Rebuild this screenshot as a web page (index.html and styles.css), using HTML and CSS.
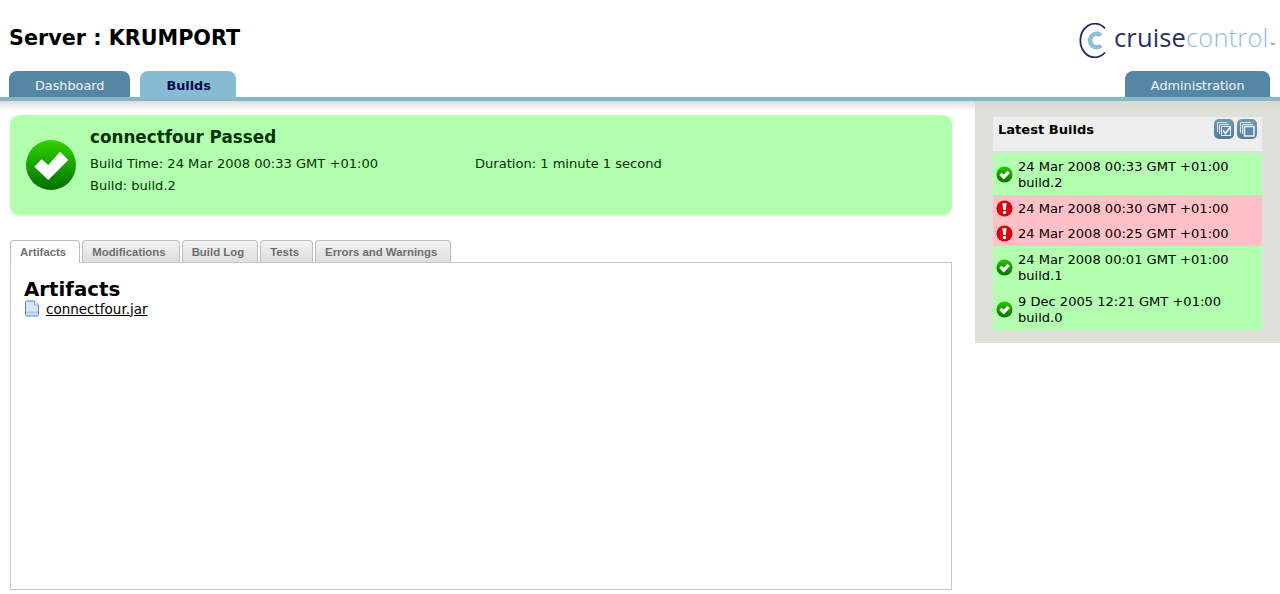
FILE: index.html
```html
<!DOCTYPE html>
<html lang="en">
<head>
<meta charset="utf-8">
<title>CruiseControl - connectfour</title>
<link rel="stylesheet" href="styles.css">
</head>
<body>
<header class="header">
  <div class="header-top">
    <h1 class="server">Server : KRUMPORT</h1>
    <div class="logo">
      <svg class="logo-mark" width="30" height="35" viewBox="0 0 30 35">
        <path d="M26 5.500A14.500 16.800 0 1 0 26 29.500" fill="none" stroke="#1d2a62" stroke-width="1.800"/>
        <path d="M22 12.500A6.500 6.800 0 1 0 22 22.500" fill="none" stroke="#8fc1d6" stroke-width="4.500"/>
      </svg>
      <span class="logo-dark">cruise</span><span class="logo-light">control</span><span class="logo-tm">™</span>
    </div>
  </div>
  <nav class="nav">
    <a class="nav-tab">Dashboard</a>
    <a class="nav-tab nav-tab-active">Builds</a>
    <a class="nav-tab nav-tab-admin">Administration</a>
  </nav>
</header>
<div class="page">
  <main class="main">
    <section class="status">
      <svg class="status-icon" width="50" height="50" viewBox="0 0 50 50">
        <defs>
          <linearGradient id="g1" x1="0" y1="0" x2="0" y2="1">
            <stop offset="0" stop-color="#2fd400"/>
            <stop offset="1" stop-color="#036f00"/>
          </linearGradient>
        </defs>
        <circle cx="25" cy="25" r="25" fill="url(#g1)"/>
        <path d="M8.300 26.700L15.700 19.300L22.300 25L34 11.700L42.300 20L22.300 40z" fill="#fff"/>
      </svg>
      <div class="status-body">
        <h2 class="status-title">connectfour Passed</h2>
        <div class="status-row">
          <span class="status-time">Build Time: 24 Mar 2008 00:33 GMT +01:00</span>
          <span>Duration: 1 minute 1 second</span>
        </div>
        <div class="status-row">Build: build.2</div>
      </div>
    </section>
    <ul class="tabs">
      <li class="tab tab-active">Artifacts</li>
      <li class="tab">Modifications</li>
      <li class="tab">Build Log</li>
      <li class="tab">Tests</li>
      <li class="tab">Errors and Warnings</li>
    </ul>
    <section class="panel">
      <h2 class="panel-title">Artifacts</h2>
      <div class="artifact">
        <svg width="16" height="17" viewBox="0 0 16 17">
          <path d="M1.500 2.500a1.500 1.500 0 0 1 1.500-1.500h7.500l4 4v9.500a1.500 1.500 0 0 1-1.500 1.500h-10a1.500 1.500 0 0 1-1.500-1.500z" fill="#d3e6f7" stroke="#4a86c4"/>
          <path d="M2 11.500h12v2H2z" fill="#a9cdee"/>
          <path d="M10.500 1v4h4" fill="#f2f8fd" stroke="#7fabd8"/>
        </svg>
        <a class="artifact-link">connectfour.jar</a>
      </div>
    </section>
  </main>
  <aside class="side">
    <div class="side-head">
      <span class="side-title">Latest Builds</span>
      <span class="side-buttons">
        <span class="side-btn">
          <svg width="20" height="20" viewBox="0 0 20 20"><path d="M3.500 13V3.500H13M5.500 15V5.500H15" fill="none" stroke="#dce8ee"/><rect x="7.500" y="7.500" width="9" height="9" fill="#5f8aa5" stroke="#eef4f7"/><path d="M9 11.500l2.500 3 4.500-6" fill="none" stroke="#fff" stroke-width="1.500"/></svg>
        </span>
        <span class="side-btn">
          <svg width="20" height="20" viewBox="0 0 20 20"><path d="M3.500 14V3.500H14M5.500 15V5.500H16" fill="none" stroke="#dce8ee"/><rect x="7.500" y="7.500" width="9.500" height="9.500" fill="#5f8aa5" stroke="#eef4f7" stroke-width="1.500"/></svg>
        </span>
      </span>
    </div>
    <ul class="builds">
      <li class="build build-ok">
        <svg class="build-icon" width="17" height="17" viewBox="0 0 18 18"><use href="#ok"/></svg>
        <span>24 Mar 2008 00:33 GMT +01:00<br>build.2</span>
      </li>
      <li class="build build-fail">
        <svg class="build-icon" width="17" height="17" viewBox="0 0 18 18"><use href="#bad"/></svg>
        <span>24 Mar 2008 00:30 GMT +01:00</span>
      </li>
      <li class="build build-fail">
        <svg class="build-icon" width="17" height="17" viewBox="0 0 18 18"><use href="#bad"/></svg>
        <span>24 Mar 2008 00:25 GMT +01:00</span>
      </li>
      <li class="build build-ok">
        <svg class="build-icon" width="17" height="17" viewBox="0 0 18 18"><use href="#ok"/></svg>
        <span>24 Mar 2008 00:01 GMT +01:00<br>build.1</span>
      </li>
      <li class="build build-ok">
        <svg class="build-icon" width="17" height="17" viewBox="0 0 18 18"><use href="#ok"/></svg>
        <span>9 Dec 2005 12:21 GMT +01:00<br>build.0</span>
      </li>
    </ul>
  </aside>
</div>
<svg class="defs" width="0" height="0">
  <defs>
    <linearGradient id="g2" x1="0" y1="0" x2="0" y2="1">
      <stop offset="0" stop-color="#2cc400"/>
      <stop offset="1" stop-color="#067000"/>
    </linearGradient>
    <g id="ok">
      <circle cx="9" cy="9" r="8.500" fill="url(#g2)"/>
      <path d="M3.500 9.500l2.400-2.400 2.300 2.200 4-4.300 2.500 2.500-6.500 6.800z" fill="#fff"/>
    </g>
    <g id="bad">
      <circle cx="9" cy="9" r="8.500" fill="#d90012"/>
      <path d="M6.800 3.500h4.400l-.8 7H7.600z" fill="#fff"/>
      <circle cx="9" cy="13.300" r="1.800" fill="#fff"/>
    </g>
  </defs>
</svg>
</body>
</html>
```
FILE: styles.css
```css
* { box-sizing: border-box; }
html, body { margin: 0; padding: 0; }
body {
  background: #fff;
  color: #000;
  font-family: "DejaVu Sans", Verdana, sans-serif;
  font-size: 13.06px;
  height: 594px;
  overflow: hidden;
}
.header-top {
  height: 71px;
  display: flex;
  justify-content: space-between;
  padding: 25px 5px 0 9px;
}
.server { margin: 0; font-size: 20.72px; line-height: 26px; font-weight: bold; }
.logo {
  display: flex;
  align-items: baseline;
  margin-top: -5px;
  height: 40px;
  font-family: "Open Sans", sans-serif;
  font-size: 25.5px;
  letter-spacing: 0.15px;
}
.logo-mark { align-self: flex-start; margin: 3px 5px 0 0; }
.logo-dark { color: #25306a; font-weight: 500; }
.logo-light { color: #8fc1d6; font-weight: 300; }
.logo-tm { font-size: 6px; color: #555; letter-spacing: 0; margin-left: 2px; }
.nav {
  display: flex;
  gap: 10px;
  height: 30px;
  padding: 0 10px 0 9px;
  border-bottom: 4px solid #84b8c6;
  font-size: 12.8px;
}
.nav-tab {
  height: 26px;
  padding: 2px 26px 0;
  display: flex;
  align-items: center;
  background: #5587a5;
  color: #f0f5f8;
  border-radius: 8px 8px 0 0;
}
.nav-tab-active { background: #86bbd4; color: #020a48; font-weight: bold; height: 27px; padding: 2px 25.500px 0 26px; }
.nav-tab-admin { margin-left: auto; padding: 2px 25.500px 0; }
.page {
  display: flex;
  align-items: flex-start;
  background: linear-gradient(#dcdcdc, #fff 10px) no-repeat;
  background-size: 100% 14px;
}
.main { width: 975px; padding: 14px 23px 0 10px; }
.status {
  height: 100px;
  background: #b3ffb0;
  border-radius: 9px;
  display: flex;
  color: #003300;
  padding: 25px 0 0 16px;
  box-shadow: 0 1px 1px rgba(179, 255, 176, 0.5);
}
.status-icon { flex: none; }
.status-body { margin: -15px 0 0 14px; }
.status-title { margin: 0 0 4px; font-size: 16.8px; line-height: 24px; font-weight: bold; }
.status-row { line-height: 22px; display: flex; }
.status-time { width: 385px; }
.tabs {
  list-style: none;
  display: flex;
  gap: 2px;
  margin: 25px 0 0;
  padding: 0;
  height: 22px;
  font-family: "Liberation Sans", Arial, sans-serif;
  font-size: 11.4px;
  font-weight: bold;
  color: #6f6f6f;
  position: relative;
  z-index: 1;
}
.tab {
  height: 22px;
  padding: 1px 13px 0 9px;
  display: flex;
  align-items: center;
  background: linear-gradient(#f2f2f2, #dedede);
  border: 1px solid #bdbdbd;
  border-bottom: 0;
  border-radius: 4px 4px 0 0;
}
.tab-active { background: #fff; height: 23px; padding: 0 13px 0 9px; }
.panel {
  height: 328px;
  border: 1px solid #c6c6c6;
  padding: 15px 13px;
}
.panel-title { margin: 0 0 -2px; font-size: 19.8px; line-height: 24px; font-weight: bold; }
.artifact { display: flex; align-items: center; gap: 6px; line-height: 16px; font-size: 13.5px; }
.artifact-link { color: #000; text-decoration: underline; }
.side {
  width: 305px;
  height: 242px;
  background: linear-gradient(#d8d8d4, #e0e0da 10px);
  padding: 16px 18px 0;
}
.side-head {
  height: 34px;
  background: #eeeeee;
  display: flex;
  justify-content: space-between;
  padding: 2px 5px 0 5px;
}
.side-title { font-weight: bold; line-height: 20px; padding-top: 1px; }
.side-buttons { display: flex; gap: 3px; }
.side-btn {
  width: 20px;
  height: 20px;
  border-radius: 5px;
  background: linear-gradient(#719ab4, #4f7c98);
  display: block;
}
.side-btn svg { display: block; }
.builds { list-style: none; margin: 2px 0 0; padding: 0; }
.build {
  display: flex;
  align-items: center;
  gap: 5px;
  padding: 6px 3px 4px;
  line-height: 16px;
}
.build-fail { padding-bottom: 3px; }
.build-fail + .build-fail { padding-bottom: 4px; }
.build-ok { background: #b3ffb0; }
.build-fail { background: #ffc0c8; }
.build-icon { flex: none; margin: -2px 0 0; }
.defs { position: absolute; }
```
